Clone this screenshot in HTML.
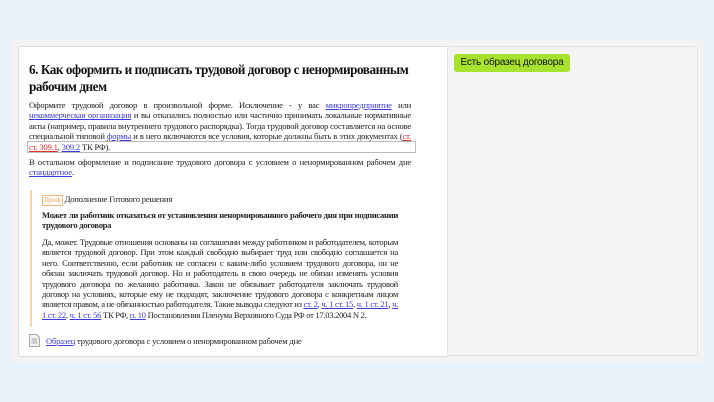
<!DOCTYPE html>
<html><head><meta charset="utf-8"><style>
body{margin:0;width:714px;height:402px;background:#e9f2fb;position:relative;overflow:hidden;font-family:"Liberation Serif",serif;color:#222}
.outer{position:absolute;left:10px;top:39px;width:694px;height:323px;background:#f3f3f3}
.doc{position:absolute;left:18px;top:46px;width:429px;height:309px;background:#fff;border:1px solid #ddd;border-radius:3px}
.right{position:absolute;left:447px;top:46px;width:249px;height:308px;background:#f4f4f4;border:1px solid #e2e2e2;border-radius:3px}
.badge{position:absolute;left:454px;top:54px;width:116px;height:18px;background:#a7e22e;border-radius:3px;font:10px "Liberation Sans",sans-serif;line-height:18px;text-align:center;color:#111;white-space:nowrap;letter-spacing:-0.2px}
.p{position:absolute;font-family:"Liberation Serif",serif;font-size:8.6px;letter-spacing:-0.2px;line-height:10.4px;text-align:justify}
.qt{letter-spacing:-0.3px}
h1{position:absolute;left:29px;top:62px;width:385px;margin:0;font-family:"Liberation Serif","DejaVu Serif",serif;font-size:13.2px;letter-spacing:-0.45px;line-height:16.5px;font-weight:bold;color:#111}
a{color:#3c3cd8;text-decoration:underline}
a.r{color:#e03030}
.hl{position:absolute;left:27px;top:141px;width:387px;height:10px;border:1px solid #bbb}
.q{position:absolute;left:30px;top:190px;width:2px;height:137px;background:#fbd3a8}
.prof{display:inline-block;border:1px solid #f7b77a;color:#f7a35a;font-size:7px;padding:0 1px;line-height:9px;margin-right:2px;letter-spacing:0}
</style></head><body>
<div class="outer"></div>
<div class="doc"></div>
<div class="right"></div>
<div class="badge">Есть образец договора</div>
<h1>6. Как оформить и подписать трудовой договор с ненормированным рабочим днем</h1>
<div class="hl"></div>
<div class="p" style="left:29px;top:100px;width:382px">Оформите трудовой договор в произвольной форме. Исключение - у вас <a>микропредприятие</a> или <a>некоммерческая организация</a> и вы отказались полностью или частично принимать локальные нормативные акты (например, правила внутреннего трудового распорядка). Тогда трудовой договор составляется на основе специальной типовой <a>формы</a> и в него включаются все условия, которые должны быть в этих документах (<a class="r">ст. ст. 309.1</a>, <a>309.2</a> ТК РФ).</div>
<div class="p" style="left:29px;top:157px;width:382px">В остальном оформление и подписание трудового договора с условием о ненормированном рабочем дне <a>стандартное</a>.</div>
<div class="q"></div>
<div class="p" style="left:42px;top:194px;width:360px"><span class="prof">Проф</span>Дополнение Готового решения</div>
<div class="p qt" style="left:42px;top:210px;width:356px;font-weight:bold">Может ли работник отказаться от установления ненормированного рабочего дня при подписании трудового договора</div>
<div class="p qt" style="left:42px;top:237px;width:356px">Да, может. Трудовые отношения основаны на соглашении между работником и работодателем, которым является трудовой договор. При этом каждый свободно выбирает труд или свободно соглашается на него. Соответственно, если работник не согласен с каким-либо условием трудового договора, он не обязан заключать трудовой договор. Но и работодатель в свою очередь не обязан изменять условия трудового договора по желанию работника. Закон не обязывает работодателя заключать трудовой договор на условиях, которые ему не подходят, заключение трудового договора с конкретным лицом является правом, а не обязанностью работодателя. Такие выводы следуют из <a>ст. 2</a>, <a>ч. 1 ст. 15</a>, <a>ч. 1 ст. 21</a>, <a>ч. 1 ст. 22</a>, <a>ч. 1 ст. 56</a> ТК РФ, <a>п. 10</a> Постановления Пленума Верховного Суда РФ от 17.03.2004 N 2.</div>
<svg style="position:absolute;left:29px;top:334px" width="11" height="13" viewBox="0 0 11 13"><path d="M.5 .5h7l3 3v9h-10z" fill="#f2f2f2" stroke="#aaa"/><path d="M2.5 5h6M2.5 7h6M2.5 9h6" stroke="#aaa"/></svg>
<div class="p" style="left:46px;top:336px;width:300px"><a>Образец</a> трудового договора с условием о ненормированном рабочем дне</div>
</body></html>
